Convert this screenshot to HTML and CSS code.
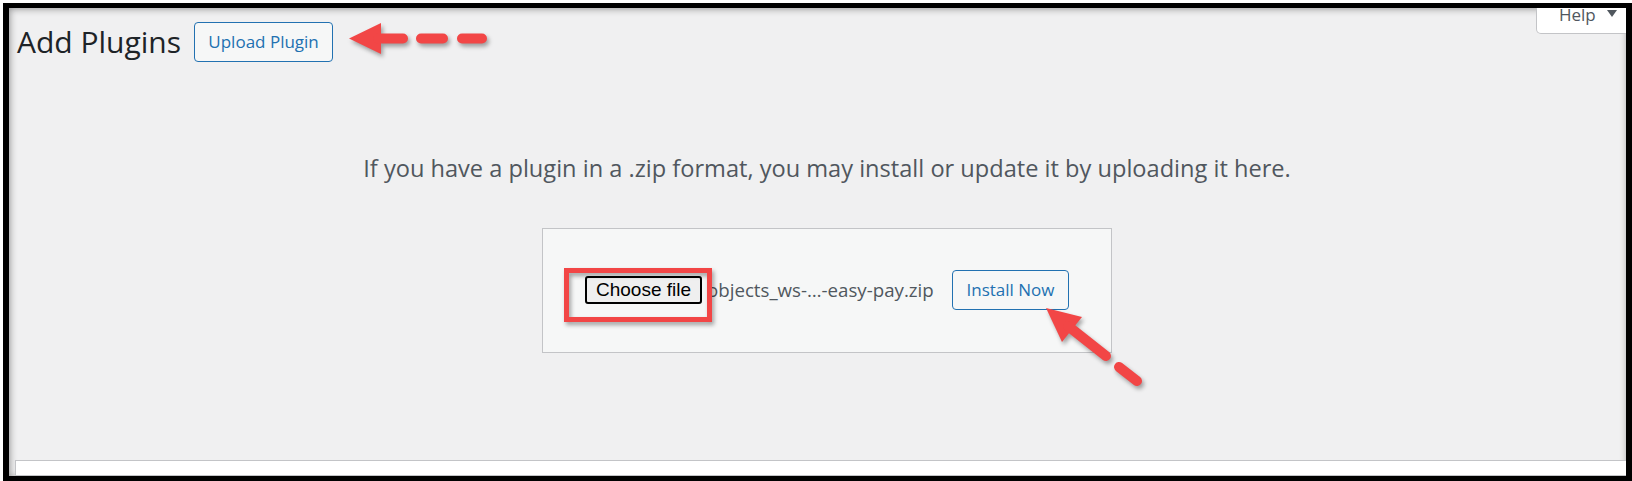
FILE: index.html
```html
<!DOCTYPE html>
<html lang="en">
<head>
<meta charset="utf-8">
<title>Add Plugins</title>
<link rel="stylesheet" href="styles.css">
</head>
<body>
<div class="frame">
  <div class="wrap">
    <div class="heading-row">
      <h1 class="page-title">Add Plugins</h1>
      <a class="btn btn-upload">Upload Plugin</a>
    </div>
    <div class="upload-plugin">
      <p class="install-help">If you have a plugin in a .zip format, you may install or update it by uploading it here.</p>
      <form class="upload-form">
        <div class="file-field">
          <button type="button" class="file-btn">Choose file</button>
          <span class="file-name">objects_ws-…-easy-pay.zip</span>
        </div>
        <button type="button" class="btn btn-install">Install Now</button>
      </form>
    </div>
  </div>
  <div class="bottom-panel"></div>
  <div class="help-tab">Help<span class="caret"></span></div>
</div>
<svg class="annotations" width="1632" height="481" viewBox="0 0 1632 481" xmlns="http://www.w3.org/2000/svg">
  <g class="anno">
    <rect x="566.5" y="270.5" width="143" height="49" fill="none" stroke="#f24646" stroke-width="5"/>
  </g>
  <g class="anno" fill="#f24646" stroke="#f24646" stroke-linecap="round">
    <polygon points="349,38.5 381,23 381,54" stroke="none"/>
    <line x1="378" y1="38.5" x2="403" y2="38.5" stroke-width="10"/>
    <line x1="421" y1="38.5" x2="443" y2="38.5" stroke-width="10"/>
    <line x1="462" y1="38.5" x2="482" y2="38.5" stroke-width="10"/>
  </g>
  <g class="anno" fill="#f24646" stroke="#f24646" stroke-linecap="round">
    <polygon points="1046,308 1082,317 1062,342" stroke="none"/>
    <line x1="1068" y1="326" x2="1106" y2="356" stroke-width="10"/>
    <line x1="1119" y1="367" x2="1137" y2="381" stroke-width="10"/>
  </g>
</svg>
</body>
</html>
```
FILE: styles.css
```css
html, body {
  margin: 0;
  padding: 0;
  overflow: hidden;
  background: #ffffff;
}

body {
  position: relative;
  width: 1632px;
  height: 481px;
  font-family: "Open Sans", "Noto Sans", sans-serif;
}

.frame {
  position: relative;
  box-sizing: border-box;
  margin: 3px 0 0 3px;
  width: 1629px;
  height: 478px;
  border-style: solid;
  border-color: #000000;
  border-width: 5px 6px 5px 6px;
  background: #f0f0f1;
  box-shadow: inset 1px 1px 7px rgba(0, 0, 0, 0.38);
  overflow: hidden;
  display: flex;
  flex-direction: column;
}

.wrap {
  flex: none;
  padding: 14px 0 0 8px;
}

.heading-row {
  display: flex;
  align-items: center;
  height: 40px;
}

.page-title {
  margin: 0;
  font-size: 30px;
  font-weight: 400;
  line-height: 40px;
  color: #1d2327;
}

.btn {
  box-sizing: border-box;
  display: inline-block;
  height: 40px;
  border: 1px solid #2271b1;
  border-radius: 4px;
  background: #f6f7f7;
  color: #2271b1;
  font-family: "Open Sans", "Noto Sans", sans-serif;
  font-size: 17px;
  line-height: 38px;
  text-align: center;
  padding: 0;
  cursor: pointer;
}

.btn-upload {
  margin-left: 13px;
  width: 139px;
}

.upload-plugin {
  padding-left: 11px;
  display: flex;
  flex-direction: column;
  align-items: center;
}

.install-help {
  margin: 91px 0 0;
  font-size: 23.6px;
  line-height: 30px;
  color: #50575e;
  text-align: center;
}

.upload-form {
  box-sizing: border-box;
  width: 570px;
  margin: 45px 0 0;
  padding: 41px 42px 42px;
  border: 1px solid #c3c4c7;
  background: #f6f7f7;
  display: flex;
  justify-content: space-between;
  align-items: center;
}

.file-field {
  display: flex;
  align-items: center;
  gap: 5px;
}

.file-btn {
  box-sizing: border-box;
  width: 117px;
  height: 28px;
  padding: 0;
  border: 2px solid #000000;
  border-radius: 3px;
  background: #efefef;
  color: #000000;
  font-family: "Liberation Sans", Arial, sans-serif;
  font-size: 19px;
  line-height: 24px;
}

.file-name {
  font-size: 18.7px;
  color: #50575e;
  line-height: 24px;
  white-space: nowrap;
}

.btn-install {
  width: 117px;
}

.bottom-panel {
  margin: auto -2px 0 6px;
  height: 14px;
  flex: none;
  background: #ffffff;
  border: 1px solid #c3c4c7;
}

.help-tab {
  position: absolute;
  top: -8px;
  right: -2px;
  box-sizing: border-box;
  width: 92px;
  height: 34px;
  padding: 5px 0 0 22px;
  background: #ffffff;
  border: 1px solid #c3c4c7;
  border-top: none;
  border-radius: 0 0 0 5px;
  font-size: 17px;
  line-height: 20px;
  color: #50575e;
}

.caret {
  display: inline-block;
  margin-left: 11px;
  width: 0;
  height: 0;
  border-left: 5.5px solid transparent;
  border-right: 5.5px solid transparent;
  border-top: 7px solid #50575e;
  vertical-align: 4px;
}

.annotations {
  position: absolute;
  left: 0;
  top: 0;
  pointer-events: none;
}

.anno {
  filter: drop-shadow(2px 3px 2px rgba(0, 0, 0, 0.35));
}
```
